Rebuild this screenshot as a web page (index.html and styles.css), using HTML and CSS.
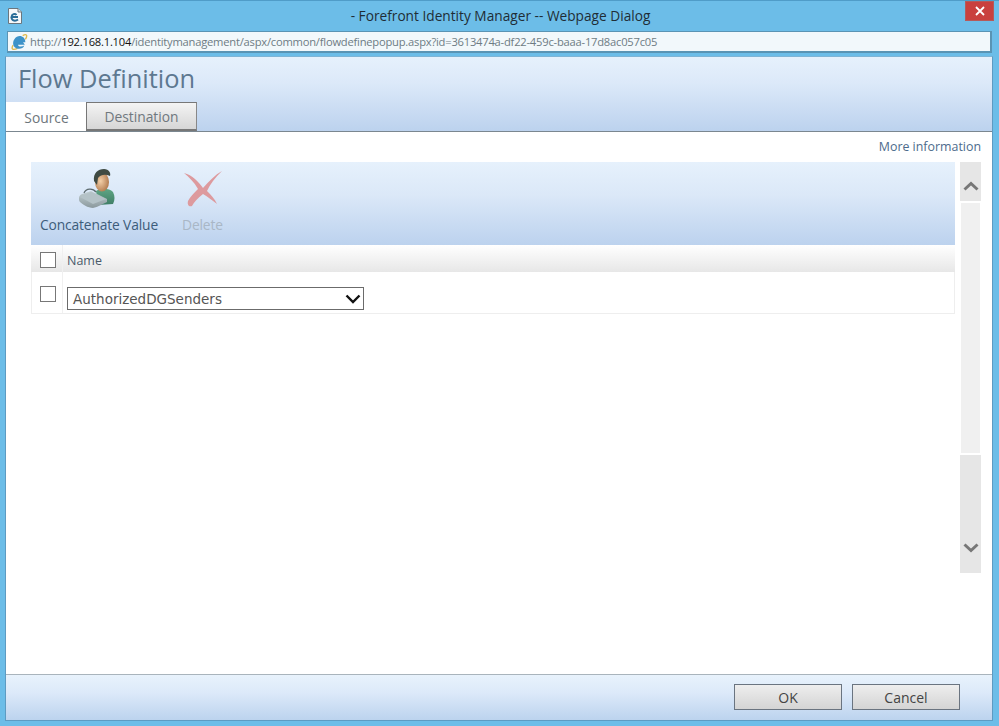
FILE: index.html
```html
<!DOCTYPE html>
<html lang="en">
<head>
<meta charset="utf-8">
<title>Forefront Identity Manager -- Webpage Dialog</title>
<link rel="stylesheet" href="styles.css">
</head>
<body>
<div class="window">
  <div class="titlebar">
    <svg class="page-icon" width="16" height="18" viewBox="0 0 16 18"><path d="M1.500 1.500H11L14.500 5V16.500H1.500Z" fill="#f6f8fa" stroke="#6a767e"/><path d="M11 1.500V5H14.500" fill="#d8e0e6" stroke="#6a767e"/><path d="M11 10H4.500C4.800 7 8 6 9.500 8M4.500 10.500C4.800 14 8.500 14.500 11 12.500" fill="none" stroke="#2a6d98" stroke-width="2"/></svg>
    <div class="window-title">- Forefront Identity Manager -- Webpage Dialog</div>
    <div class="close"><svg width="10" height="10" viewBox="0 0 10 10"><path d="M1 1L9 9M9 1L1 9" stroke="#fff" stroke-width="1.800"/></svg></div>
  </div>
  <div class="addressbar">
    <svg class="ie-icon" width="18" height="18" viewBox="0 0 17 17"><path d="M3 11.500C.5 15.500 3 16.500 7 14.500M12 2.500C15.500.5 17 2 14.500 6" fill="none" stroke="#e0b94c" stroke-width="1.300"/><path d="M14 11H7.500C7.800 13 11 13.500 13.500 11.800C12.500 15 7.500 16 4.500 13.500C2 11 2.500 6 6.500 3.500C10 1.800 14.500 3.500 14.500 8.800H7.500C7.800 6 11 5.800 11.500 7.500" fill="#3d93c9"/></svg>
    <span class="url">http://<b>192.168.1.104</b>/identitymanagement/aspx/common/flowdefinepopup.aspx?id=3613474a-df22-459c-baaa-17d8ac057c05</span>
  </div>
  <div class="dialog">
    <header class="dialog-head">
      <h1>Flow Definition</h1>
      <nav class="tabs">
        <div class="tab active">Source</div>
        <div class="tab">Destination</div>
      </nav>
    </header>
    <main class="dialog-body">
      <div class="more-row"><a class="more">More information</a></div>
      <div class="panel">
        <div class="list">
          <div class="toolbar">
            <div class="tool concat">
              <svg width="38" height="42" viewBox="0 0 38 42">
                <defs>
                  <linearGradient id="box" x1="0" y1="0" x2="0" y2="1"><stop offset="0" stop-color="#c3d0d4"/><stop offset="1" stop-color="#8b999d"/></linearGradient>
                  <linearGradient id="shirt" x1="0" y1="0" x2="0" y2="1"><stop offset="0" stop-color="#5fa684"/><stop offset="1" stop-color="#3f7d66"/></linearGradient>
                  <radialGradient id="face" cx=".4" cy=".45" r=".7"><stop offset="0" stop-color="#f3cfa8"/><stop offset="1" stop-color="#a86f42"/></radialGradient>
                </defs>
                <path d="M18 24C23 21 31 21 35 25C37 29 37 33 35 37L20 38Z" fill="url(#shirt)"/>
                <ellipse cx="24" cy="15" rx="7" ry="9.500" fill="url(#face)"/>
                <path d="M16 14C15 6 20 2 26 2C31 2 33 6 32 9C28 7 23 7 20 11L19 18Z" fill="#3f4a42"/>
                <path d="M1 31C1 29 2 28 4 27L13 24L29 32V35C24 37 20 40 15 41C10 41 4 37 2 35C1 34 1 33 1 31Z" fill="url(#box)"/>
                <path d="M2 30L13 25L28 32L15 37Z" fill="#b4c2c7"/>
                <path d="M6 26C8 21 15 21 18 25" fill="none" stroke="#5c6a6e" stroke-width="1.300"/>
              </svg>
              <span>Concatenate Value</span>
            </div>
            <div class="tool disabled">
              <svg width="40" height="42" viewBox="0 0 40 42">
                <path d="M2 6C10 8 17 15 21 21C27 14 33 8 40 4C33 11 28 17 25 24C29 28 33 32 35 37C30 33 26 30 21 27C16 31 12 35 10 39C7 40 5 38 6 34C8 30 12 26 16 22C12 15 7 10 2 6Z" fill="#dd9a9e"/>
              </svg>
              <span>Delete</span>
            </div>
          </div>
          <div class="row head">
            <div class="check-cell"><span class="checkbox"></span></div>
            <div class="name-cell">Name</div>
          </div>
          <div class="row item">
            <div class="check-cell"><span class="checkbox"></span></div>
            <div class="name-cell">
              <div class="select">
                <span>AuthorizedDGSenders</span>
                <svg width="16" height="10" viewBox="0 0 16 10"><path d="M1.500 1.500L8 8L14.500 1.500" fill="none" stroke="#111" stroke-width="2.400"/></svg>
              </div>
            </div>
          </div>
        </div>
        <div class="scrollbar">
          <div class="scroll-btn up"><svg width="16" height="10" viewBox="0 0 16 10"><path d="M1.500 8.500L8 2.500L14.500 8.500" fill="none" stroke="#777" stroke-width="3"/></svg></div>
          <div class="scroll-thumb"></div>
          <div class="scroll-btn down"><svg width="16" height="10" viewBox="0 0 16 10"><path d="M1.500 1.500L8 7.500L14.500 1.500" fill="none" stroke="#777" stroke-width="3"/></svg></div>
        </div>
      </div>
    </main>
    <footer class="dialog-foot">
      <button class="btn" type="button">OK</button>
      <button class="btn" type="button">Cancel</button>
    </footer>
  </div>
</div>
</body>
</html>
```
FILE: styles.css
```css
* { box-sizing: border-box; }
html, body { margin: 0; height: 100%; }
body { font-family: "Open Sans", "Liberation Sans", sans-serif; overflow: hidden; background: #6cbde8; }
.window { width: 999px; height: 726px; background: #6cbde8; border-top: 1px solid #4f9cc8; display: flex; flex-direction: column; padding: 0 6px 5px 5px; }
.titlebar { height: 30px; flex: none; display: flex; align-items: center; position: relative; color: #20343f; }
.page-icon { margin: -1px 0 0 2px; }
.window-title { position: absolute; left: 0; right: 0; top: 6px; text-align: center; font-size: 13.700px; line-height: 18px; padding-left: 3px; color: #1f2d36; }
.close { position: absolute; right: -1px; top: 0; width: 29px; height: 20px; background: #c9403e; border: 1px solid #b55a5a; display: flex; align-items: center; justify-content: center; }
.addressbar { height: 22px; flex: none; margin: 0 1px 0 2px; background: #f2f8fb; border: 1px solid #5a94b4; border-right-width: 2px; border-bottom-width: 2px; display: flex; align-items: center; padding-left: 2px; gap: 2px; }
.ie-icon { flex: none; }
.url { font-size: 11.200px; color: #6e7c84; white-space: nowrap; letter-spacing: -.02em; }
.url b { font-weight: 400; color: #111; }
.dialog { flex: 1; margin-top: 3px; display: flex; flex-direction: column; background: #fff; min-height: 0; border: 1px solid #5d9bc2; border-top-color: #7fb5d6; }
.dialog-head { flex: none; height: 75px; background: linear-gradient(#e6f1fc, #dce9f9 35%, #bcd2ee); border-bottom: 1px solid #7b8790; display: flex; flex-direction: column; }
h1 { margin: 0; padding: 2px 0 0 12px; font-size: 25.400px; line-height: 38px; height: 45px; font-weight: 400; color: #5d7890; }
.tabs { display: flex; height: 29px; flex: none; }
.tab { font-size: 13.800px; color: #70787e; display: flex; align-items: center; justify-content: center; height: 29px; width: 111px; background: linear-gradient(#f4f4f4, #d6d6d6); border: 1px solid #777; border-bottom-width: 2px; border-right-color: #888; padding-top: 1px; }
.tab.active { width: 80px; background: #fff; border: 0; height: 29px; color: #6d767c; padding: 1px 0 0 1px; }
.dialog-body { flex: 1; min-height: 0; padding: 0 11px 0 25px; display: flex; flex-direction: column; }
.more-row { height: 30px; flex: none; display: flex; justify-content: flex-end; align-items: center; padding-bottom: 2px; }
.more { font-size: 12.400px; color: #4d6b8c; }
.panel { display: flex; gap: 5px; align-items: flex-start; }
.list { width: 924px; flex: none; }
.toolbar { height: 83px; background: linear-gradient(#e6f1fc, #dbe8f8 40%, #bcd2ee); display: flex; padding-left: 9px; gap: 24px; }
.tool { display: flex; flex-direction: column; align-items: center; font-size: 13.800px; color: #3d5c7a; }
.tool svg { flex: none; margin-top: 5px; }
.concat svg { margin-right: 5px; }
.tool span { margin-top: 6px; line-height: 20px; letter-spacing: -.01em; white-space: nowrap; }
.tool.disabled { color: #a9b7c6; }
.row { display: flex; }
.row.head { height: 27px; background: linear-gradient(#fff, #e7e7e7); font-size: 12.500px; color: #4a5a6a; }
.row.item { height: 42px; border: 1px solid #eee; border-top: 0; }
.check-cell { width: 32px; flex: none; border-right: 1px solid #f0f0f0; display: flex; justify-content: center; padding: 7px 0 0 2px; }
.item .check-cell { width: 31px; padding: 14px 0 0 2px; }
.checkbox { width: 16px; height: 16px; border: 1px solid #777; background: #fff; display: block; }
.name-cell { flex: 1; padding-left: 4px; display: flex; align-items: center; }
.head .name-cell { padding-top: 3px; }
.item .name-cell { align-items: flex-start; padding-top: 15px; }
.select { width: 297px; height: 23px; border: 1px solid #6b6b6b; background: #fff; display: flex; align-items: center; justify-content: space-between; padding: 0 2px 0 5px; font-family: "DejaVu Sans", sans-serif; font-size: 13.500px; color: #555; }
.scrollbar { width: 21px; flex: none; display: flex; flex-direction: column; }
.scroll-btn { background: #e6e6e6; flex: none; display: flex; justify-content: center; }
.scroll-btn.up { height: 39px; padding-top: 19px; }
.scroll-thumb { height: 250px; margin: 2px 1px 2px 1px; background: #f0f0f0; }
.scroll-btn.down { height: 118px; padding-top: 88px; }
.dialog-foot { flex: none; height: 46px; background: linear-gradient(#e8f2fc, #dce9f9 40%, #bcd3ee); border-top: 1px solid #a9b4bc; display: flex; justify-content: flex-end; gap: 10px; padding: 9px 32px 0 0; }
.btn { width: 108px; height: 26px; font-family: inherit; font-size: 14px; color: #444; background: linear-gradient(#eee, #d4d4d4); border: 1px solid #6a7480; padding: 1px 0 0; }
```
